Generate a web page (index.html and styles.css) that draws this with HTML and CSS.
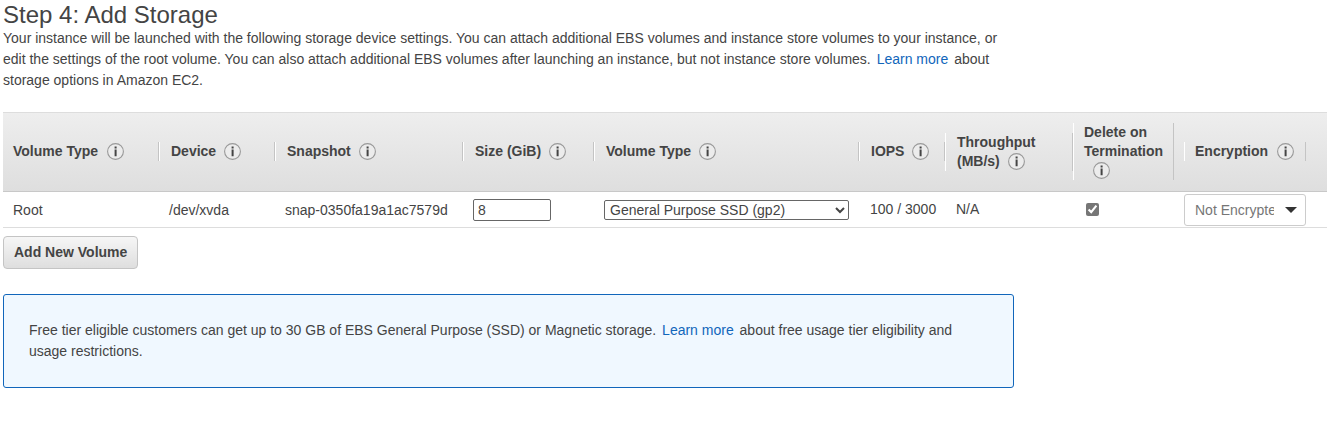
FILE: index.html
```html
<!DOCTYPE html>
<html lang="en">
<head>
<meta charset="utf-8">
<title>Step 4: Add Storage</title>
<link rel="stylesheet" href="styles.css">
</head>
<body>
<svg class="symbols" aria-hidden="true">
  <symbol id="info" viewBox="0 0 17 17">
    <circle cx="8.5" cy="8.5" r="7.9" fill="#ececec" stroke="#999" stroke-width="1.1"/>
    <path d="M7.6 3.6h2v1.9h-2zM7.6 6.5h2v6.8h-2z" fill="#444"/>
  </symbol>
</svg>
<main class="page">
  <h1 class="title">Step 4: Add Storage</h1>
  <p class="intro">Your instance will be launched with the following storage device settings. You can attach additional EBS volumes and instance store volumes to your instance, or edit the settings of the root volume. You can also attach additional EBS volumes after launching an instance, but not instance store volumes. <a class="link" href="#">Learn more</a> about storage options in Amazon EC2.</p>

  <table class="volumes">
    <colgroup>
      <col class="col-type"><col class="col-device"><col class="col-snapshot"><col class="col-size"><col class="col-volume"><col class="col-iops"><col class="col-throughput"><col class="col-delete"><col class="col-encryption">
    </colgroup>
    <thead>
      <tr>
        <th scope="col"><div class="head head-first">Volume Type<svg class="info"><use href="#info"/></svg></div></th>
        <th scope="col"><div class="head">Device<svg class="info"><use href="#info"/></svg></div></th>
        <th scope="col"><div class="head">Snapshot<svg class="info"><use href="#info"/></svg></div></th>
        <th scope="col"><div class="head">Size (GiB)<svg class="info"><use href="#info"/></svg></div></th>
        <th scope="col"><div class="head">Volume Type<svg class="info"><use href="#info"/></svg></div></th>
        <th scope="col"><div class="head">IOPS<svg class="info"><use href="#info"/></svg></div></th>
        <th scope="col"><div class="head">Throughput (MB/s)<svg class="info"><use href="#info"/></svg></div></th>
        <th scope="col"><div class="head head-delete">Delete on Termination<svg class="info"><use href="#info"/></svg></div></th>
        <th scope="col"><div class="head head-encryption">Encryption<svg class="info"><use href="#info"/></svg></div></th>
      </tr>
    </thead>
    <tbody>
      <tr>
        <td>Root</td>
        <td>/dev/xvda</td>
        <td>snap-0350fa19a1ac7579d</td>
        <td><input class="size" type="text" value="8" aria-label="Size (GiB)"></td>
        <td><select class="volume" aria-label="Volume Type"><option>General Purpose SSD (gp2)</option></select></td>
        <td class="cell-plain">100 / 3000</td>
        <td class="cell-plain">N/A</td>
        <td class="cell-check"><input class="check" type="checkbox" checked aria-label="Delete on Termination"></td>
        <td class="cell-encryption"><div class="encryption"><select class="encryption-select" aria-label="Encryption"><option>Not Encrypted</option></select></div></td>
      </tr>
    </tbody>
  </table>

  <button class="add" type="button">Add New Volume</button>

  <p class="notice">Free tier eligible customers can get up to 30 GB of EBS General Purpose (SSD) or Magnetic storage. <a class="link" href="#">Learn more</a> about free usage tier eligibility and usage restrictions.</p>
</main>
</body>
</html>
```

FILE: styles.css
```css
* { box-sizing: border-box; }

body {
  margin: 0;
  background: #fff;
  color: #444;
  font: 14px/21px "Liberation Sans", Arial, sans-serif;
}

input, select, button { font: inherit; color: inherit; margin: 0; }

.symbols { display: none; }
.page { padding: 2px 0 0 3px; }

.title { margin: 0; font-size: 24px; line-height: 26px; font-weight: 400; }
.intro { margin: 0 0 21px; max-width: 1011px; }
.link { margin: 0 2px; color: #1166bb; text-decoration: none; }

.volumes {
  width: 100%;
  table-layout: fixed;
  border-collapse: separate;
  border-spacing: 0;
}
.col-type { width: 156px; }
.col-device { width: 116px; }
.col-snapshot { width: 188px; }
.col-size { width: 131px; }
.col-volume { width: 265px; }
.col-iops { width: 86px; }
.col-throughput { width: 128px; }
.col-delete { width: 111px; }

.volumes thead tr { background: linear-gradient(#eee, #dedede); }
.volumes th {
  height: 80px;
  padding: 0 0 1px;
  border-top: 1px solid #ddd;
  border-bottom: 1px solid #c8c8c8;
  text-align: left;
}
.head {
  padding-left: 11px;
  border-left: 1px solid #fff;
  border-right: 1px solid #c4c4c4;
  line-height: 19px;
}
.head-first { padding-left: 10px; border-left: 0; }
.head-delete { margin-right: 10px; padding-left: 10px; }
.head-encryption { max-width: 122px; padding-left: 10px; }
.info {
  width: 17px;
  height: 17px;
  margin-left: 8px;
  vertical-align: -4px;
}
.head-first .info,
.head-delete .info,
.head-encryption .info { margin-left: 9px; }

.volumes td {
  height: 36px;
  padding: 1px 10px 0;
  border-bottom: 1px solid #ddd;
  white-space: nowrap;
}
.size {
  display: block;
  width: 78px;
  height: 22px;
  padding: 0 4px;
  border: 1px solid #666;
  border-radius: 2px;
  background: #fff;
}
.volume {
  display: block;
  width: 245px;
  height: 20px;
  padding: 0 1px;
  border: 1px solid #666;
  border-radius: 2px;
  background: #fff;
}
.volumes .cell-plain { padding: 0 11px; }
.volumes .cell-check { padding: 0 13px; }
.check {
  display: block;
  width: 13px;
  height: 13px;
  accent-color: #767676;
}
.volumes .cell-encryption { padding: 0; }
.encryption { position: relative; max-width: 122px; }
.encryption::after {
  content: "";
  position: absolute;
  top: 13px;
  right: 9px;
  border: 6px solid transparent;
  border-top-color: #333;
  border-bottom: 0;
  pointer-events: none;
}
.encryption-select {
  display: block;
  width: 100%;
  height: 32px;
  padding: 1px 31px 0 10px;
  border: 1px solid #ccc;
  border-radius: 3px;
  background: #fff;
  color: #767676;
  appearance: none;
}

.add {
  display: block;
  height: 33px;
  margin-top: 8px;
  padding: 0 10px;
  border: 1px solid #c4c4c4;
  border-radius: 4px;
  background: linear-gradient(#f6f6f6, #dedede);
  font-weight: 700;
}

.notice {
  max-width: 1011px;
  margin: 25px 0 0;
  padding: 25px;
  border: 1px solid #1166bb;
  border-radius: 3px;
  background: #f0f8ff;
}
```
